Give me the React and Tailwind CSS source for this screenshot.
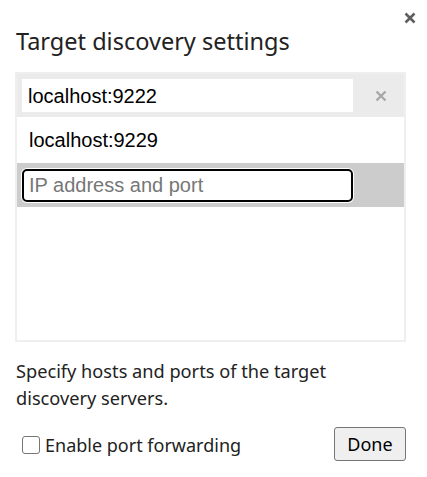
import React from 'react';

export default function App() {
  const ui = { fontFamily: '"Noto Sans", "Open Sans", sans-serif' };
  const field = { fontFamily: '"Liberation Sans", Arial, sans-serif' };

  return (
    <div className="relative w-[427px] h-[477px] bg-white text-[#222]" style={ui}>
      {/* close */}
      <button className="absolute right-[9px] top-[10px] w-[16px] h-[16px] flex items-center justify-center">
        <svg width="12" height="12" viewBox="0 0 12 12">
          <path d="M1.5 1.5 L10.5 10.5 M10.5 1.5 L1.5 10.5" stroke="#5f5f5f" strokeWidth="2.6" />
        </svg>
      </button>

      <div className="pt-[24px] pl-[15px]">
        <h1 className="text-[23.5px] leading-[34px] font-normal text-[#222] pl-[1px]">Target discovery settings</h1>

        <div className="mt-[14px] w-[391px] h-[270px] border-2 border-[#efefef] bg-white" style={field}>
          {/* row 1 */}
          <div className="h-[43px] bg-[#ebebeb] flex items-center pl-[5px]">
            <div className="w-[331px] h-[33px] bg-white flex items-center pl-[6px] text-[20px] text-black">
              localhost:9222
            </div>
            <div className="flex-1 flex justify-center pl-[4px]">
              <svg width="12" height="12" viewBox="0 0 12 12">
                <path d="M1.5 1.5 L10.5 10.5 M10.5 1.5 L1.5 10.5" stroke="#a8a8a8" strokeWidth="2.4" />
              </svg>
            </div>
          </div>
          {/* row 2 */}
          <div className="h-[46px] flex items-center pl-[12px] text-[20px] text-black">
            localhost:9229
          </div>
          {/* row 3 */}
          <div className="h-[44px] bg-[#cccccc] flex items-center pl-[5px]">
            <div className="w-[331px] h-[33px] rounded-[5px] bg-white ring-1 ring-white">
              <input
                placeholder="IP address and port"
                className="w-full h-full rounded-[5px] border-2 border-black px-[5px] text-[20px] text-black placeholder-[#777] outline-none bg-white"
                style={field}
              />
            </div>
          </div>
        </div>

        <p className="mt-[16px] text-[18.2px] leading-[27px] text-[#222] pl-[1px] w-[340px]">
          Specify hosts and ports of the target discovery servers.
        </p>

        <div className="mt-[15px] w-[391px] flex items-center justify-between">
          <label className="flex items-center gap-[5px] pl-[7px] pt-[2px] text-[18px] text-[#222]">
            <span className="w-[18px] h-[18px] rounded-[3px] border border-[#767676] bg-white inline-block" />
            Enable port forwarding
          </label>
          <button className="h-[34px] w-[72px] rounded-[3px] border border-[#767676] bg-[#efefef] text-[18px] text-black">
            Done
          </button>
        </div>
      </div>
    </div>
  );
}
